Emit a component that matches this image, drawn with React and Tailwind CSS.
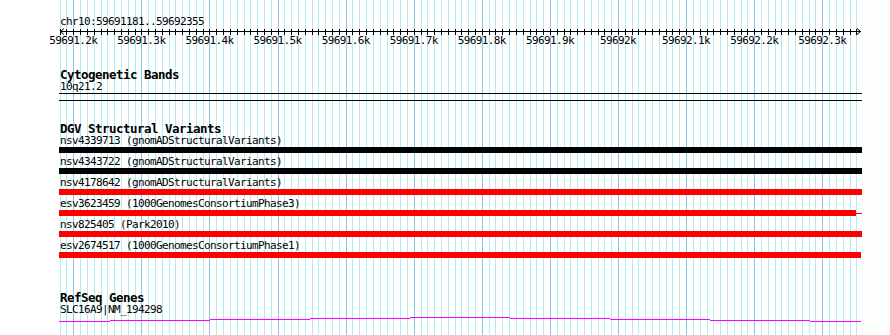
import React from "react";

// scale: 100bp = 68.09px, 59691.2k sits at x=73.3
const X0 = 73.3;
const STEP = 6.809;

const gridLines = [];
for (let k = -2; k <= 115; k++) {
  gridLines.push({ x: Math.round(X0 + STEP * k) + 0.5, major: k >= 0 && k % 10 === 0 });
}

const rulerLabels = [
  "59691.2k", "59691.3k", "59691.4k", "59691.5k", "59691.6k", "59691.7k",
  "59691.8k", "59691.9k", "59692k", "59692.1k", "59692.2k", "59692.3k",
];

const variants = [
  { name: "nsv4339713 (gnomADStructuralVariants)", color: "bg-black" },
  { name: "nsv4343722 (gnomADStructuralVariants)", color: "bg-black" },
  { name: "nsv4178642 (gnomADStructuralVariants)", color: "bg-[#ff0000]" },
  { name: "esv3623459 (1000GenomesConsortiumPhase3)", color: "bg-[#ff0000]", short: true },
  { name: "nsv825405 (Park2010)", color: "bg-[#ff0000]" },
  { name: "esv2674517 (1000GenomesConsortiumPhase1)", color: "bg-[#ff0000]", end: true },
];

// intron line steps (x1, x2, row)
const geneSteps = [
  [59, 110, 324], [110, 210, 323], [210, 310, 322], [310, 410, 321], [410, 510, 320],
  [510, 610, 321], [610, 710, 322], [710, 810, 323], [810, 861, 324],
];

const label = "pl-[60px] text-[11px] leading-[11px] tracking-[-0.62px] whitespace-nowrap";
const title = "pl-[60px] text-[12.5px] leading-[13px] tracking-[-0.52px] font-bold";

function Grid() {
  return (
    <svg className="absolute inset-0" width="890" height="335" shapeRendering="crispEdges">
      {gridLines.map((g, i) => (
        <line
          key={i}
          x1={g.x}
          x2={g.x}
          y1="0"
          y2="335"
          stroke={g.major ? "#87c8ea" : "#afeeee"}
          strokeWidth="1"
        />
      ))}
    </svg>
  );
}

function Ruler() {
  return (
    <svg className="block" width="890" height="20" shapeRendering="crispEdges">
      <line x1="60" x2="861" y1="3.5" y2="3.5" stroke="#000" />
      {gridLines.map((g, i) => (
        <line key={i} x1={g.x} x2={g.x} y1="0.5" y2="7" stroke="#000" />
      ))}
      <polyline points="64,0.5 60.5,3.5 64,6.5" fill="none" stroke="#000" shapeRendering="auto" />
      <polyline points="857,0.5 860.5,3.5 857,6.5" fill="none" stroke="#000" shapeRendering="auto" />
      {rulerLabels.map((t, i) => (
        <text
          key={t}
          x={X0 + 68.09 * i}
          y="16"
          textAnchor="middle"
          fontSize="11"
          letterSpacing="-0.62"
          fontFamily="'DejaVu Sans Mono', 'Liberation Mono', monospace"
          fill="#000"
        >
          {t}
        </text>
      ))}
    </svg>
  );
}

export default function App() {
  return (
    <div className="relative w-[890px] h-[335px] bg-white overflow-hidden text-black font-['DejaVu_Sans_Mono','Liberation_Mono',monospace]">
      <div className="absolute top-0 bottom-0 left-[862px] right-0 bg-[#fcfefc]" />
      <Grid />

      <div className="relative">
        {/* location + ruler */}
        <div className="pt-[16px] pl-[60px] text-[11px] leading-[12px] tracking-[-0.62px]">
          chr10:59691181..59692355
        </div>
        <Ruler />

        {/* Cytogenetic bands */}
        <div className={`mt-[20px] ${title}`}>Cytogenetic Bands</div>
        <div className={label}>10q21.2</div>
        <div className="ml-[59px] mt-[1px] w-[803px] h-[8px] border-y border-black" />

        {/* DGV */}
        <div className={`mt-[21px] ${title}`}>DGV Structural Variants</div>
        {variants.map((v) => (
          <div key={v.name} className="mb-[3px]">
            <div className={label}>{v.name}</div>
            <div className="mt-[1px] ml-[59px] flex items-center h-[6px]">
              {v.short ? (
                <>
                  <div className={`w-[797px] h-[6px] ${v.color}`} />
                  <div className={`w-[6px] h-[1px] ${v.color}`} />
                </>
              ) : (
                <div className={`${v.end ? "w-[802px]" : "w-[803px]"} h-[6px] ${v.color}`} />
              )}
            </div>
          </div>
        ))}

        {/* RefSeq */}
        <div className={`mt-[33px] ${title}`}>RefSeq Genes</div>
        <div className={`${label} mb-[1px]`}>SLC16A9|NM_194298</div>
        <svg className="block" width="890" height="8" shapeRendering="crispEdges">
          {geneSteps.map(([a, b, r], i) => (
            <line key={i} x1={a} x2={b} y1={r - 319 + 0.5} y2={r - 319 + 0.5} stroke="#ff00ff" />
          ))}
        </svg>
      </div>
    </div>
  );
}
